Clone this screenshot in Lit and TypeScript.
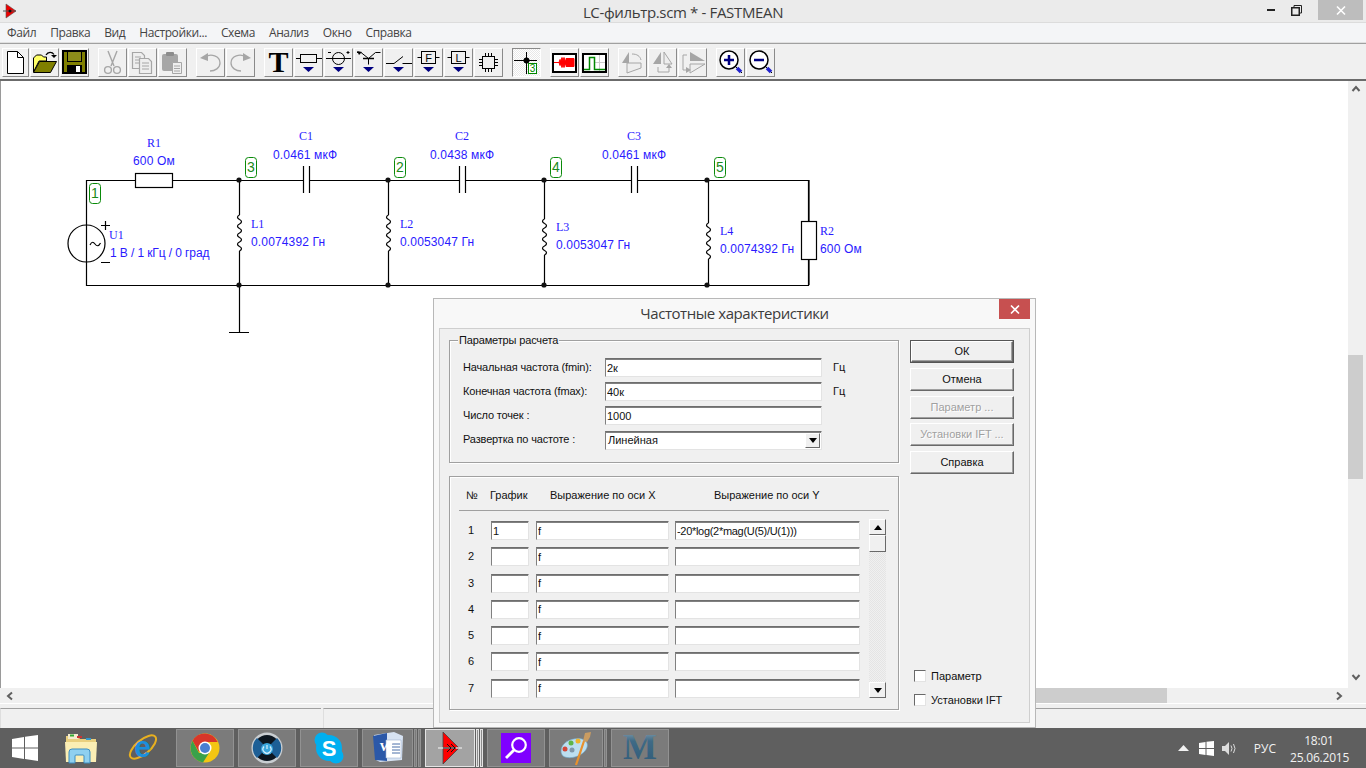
import { LitElement, html, css, svg } from 'lit';
import { customElement } from 'lit/decorators.js';

// --- toolbar icons, drawn in a 27x27 box ---
const GREY = '#a6a6a6';
const drop = svg`<path d="M8 18h11l-5.5 5z" fill="#000080"/>`;

const ICONS: Record<string, unknown> = {
  new: svg`<path d="M5.5 2.5h10l6 6v16h-16z" fill="#fff" stroke="#000"/><path d="M15.5 2.5v6h6" fill="none" stroke="#000"/>`,
  open: svg`<path d="M2.5 23V9l3-3h5l2 2h3v4H8z" fill="#ff6" stroke="#000"/>
    <path d="M2.5 23.5 8.5 12.5h17l-6 11z" fill="#808000" stroke="#000"/>
    <path d="M15 6c2-3.5 6-3.5 8-.5" fill="none" stroke="#000" stroke-width="1.3"/><path d="M20 6h6l-3 3z" fill="#000"/>`,
  save: svg`<rect x="2" y="2" width="23" height="22" fill="#808000" stroke="#000" stroke-width="2"/>
    <rect x="6.5" y="2.5" width="14" height="10" fill="#8c8c1a" stroke="#000"/>
    <rect x="6" y="16" width="15" height="8" fill="#000"/><rect x="15" y="17" width="4" height="6" fill="#fff"/>`,
  cut: svg`<g fill="none" stroke="${GREY}" stroke-width="1.4"><path d="M9 2l6 15M18 2l-6 15"/><circle cx="9" cy="21" r="3.4"/><circle cx="18" cy="21" r="3.4"/></g>`,
  copy: svg`<g fill="#eee" stroke="${GREY}" stroke-width="1.2"><path d="M3.5 3.5h9l3 3v13h-12z"/><path d="M10.5 9.5h9l3 3v12h-12z"/><path d="M6 8h6M6 11h4M6 14h4M13 14h7M13 17h7M13 20h7" fill="none"/></g>`,
  paste: svg`<rect x="3" y="5" width="16" height="17" rx="2" fill="${GREY}"/><rect x="7" y="3" width="8" height="4" rx="1" fill="#8c8c8c"/>
    <path d="M13.5 13.5h9v11h-9z" fill="#eee" stroke="${GREY}"/><path d="M15 17h6M15 19.5h6M15 22h6" stroke="${GREY}"/>`,
  undo: svg`<path d="M8 8c6-4 15-1 15 6 0 5-5 8-10 8" fill="none" stroke="${GREY}" stroke-width="1.3"/><path d="M3 9l8-5v8z" fill="${GREY}"/>`,
  redo: svg`<path d="M19 8c-6-4-15-1-15 6 0 5 5 8 10 8" fill="none" stroke="${GREY}" stroke-width="1.3"/><path d="M24 9l-8-5v8z" fill="${GREY}"/>`,
  text: svg`<text x="13.500" y="23" text-anchor="middle" class="ti-t">T</text>`,
  res: svg`<g fill="none" stroke="#000"><rect x="5.500" y="5.500" width="16" height="8"/><path d="M1 9.500h4.500M21.500 9.500H27"/></g>${drop}`,
  source: svg`<g fill="none" stroke="#000"><circle cx="13.500" cy="9.500" r="6"/><path d="M1 9.500h25M23 2v3M21.500 3.500h3M3 3.500h3"/></g>${drop}`,
  trans: svg`<g fill="none" stroke="#000"><path d="M2 3.500h4l7.500 6 7-6h5M13.500 9.500v6"/><path d="M8 9.500h11" stroke-width="1.500"/></g><path d="M2 2l5 1-3 3z" fill="#000"/>${drop}`,
  switch: svg`<path d="M1 14.500h8l9-7M17.500 14.500H27" fill="none" stroke="#000"/>${drop}`,
  fblock: svg`<g fill="none" stroke="#000"><rect x="6.500" y="2.500" width="14" height="12"/><path d="M2.500 8.500h4M20.500 8.500h4"/></g><text x="13.500" y="13" text-anchor="middle" class="ti-b">F</text>${drop}`,
  lblock: svg`<g fill="none" stroke="#000"><rect x="6.500" y="2.500" width="14" height="12"/><path d="M2.500 8.500h4M20.500 8.500h4"/></g><text x="13.500" y="13" text-anchor="middle" class="ti-b">L</text>${drop}`,
  chip: svg`<g fill="none" stroke="#000"><rect x="7.500" y="7.500" width="12" height="12"/><path d="M10.500 4v3M13.500 4v3M16.500 4v3M10.500 20v3M13.500 20v3M16.500 20v3M4 10.500h3M4 13.500h3M4 16.500h3M20 10.500h3M20 13.500h3M20 16.500h3"/></g>`,
  node: svg`<path d="M1 11.500h23M13.500 3v22" fill="none" stroke="#000"/><circle cx="13.500" cy="11.500" r="3"/><rect x="15.500" y="14.500" width="8" height="10" fill="#fff" stroke="#080"/><text x="19.500" y="23" text-anchor="middle" class="ti-g">3</text>`,
  wave: svg`<rect x="2" y="5" width="23" height="18" fill="#fff" stroke="#000" stroke-width="2"/><path d="M3 13.500h5l1-3 1 1 1-3 1 3 1-3 1 3 1-1v-1h8v8h-8v-1l-1-1-1 3-1-3-1 3-1-3-1 1-1-3H3z" fill="#f00" stroke="#f00"/>`,
  pulse: svg`<rect x="2" y="5" width="23" height="18" fill="#fff" stroke="#000" stroke-width="2"/><path d="M18.500 6v16M13 13.500h11" stroke="#ccc"/><path d="M3 20.500h5.500v-12h5v12H24" fill="none" stroke="#080" stroke-width="1.500"/>`,
  rot: svg`<path d="M3 14 10 3v11z" fill="${GREY}"/><path d="M13 5c5 0 8 2 9 6" fill="none" stroke="${GREY}"/><path d="M8 24l14-5v-5H8z" fill="#eee" stroke="${GREY}"/>`,
  flipv: svg`<path d="M12 15V3L4 15z" fill="${GREY}"/><path d="M15 15V3l8 12z" fill="#eee" stroke="${GREY}"/><path d="M9 18v5h11v-5" fill="none" stroke="${GREY}"/><path d="M17 19h6l-3-4z" fill="${GREY}"/>`,
  fliph: svg`<path d="M11 12V3l15 9z" fill="${GREY}"/><path d="M11 15v9l15-9z" fill="#eee" stroke="${GREY}"/><path d="M8 6H4v15h4" fill="none" stroke="${GREY}"/><path d="M7 18v6l5-3z" fill="${GREY}"/>`,
  zin: svg`<circle cx="12" cy="11" r="9" fill="#fff" stroke="#000" stroke-width="1.500"/><path d="M7 11h10M12 6v10" stroke="#000080" stroke-width="2.500"/><path d="M19 18l6 6" stroke="#000"/><path d="M20 19l4 4" stroke="#2222cc" stroke-width="3.500"/>`,
  zout: svg`<circle cx="12" cy="11" r="9" fill="#fff" stroke="#000" stroke-width="1.500"/><path d="M7 11h10" stroke="#000080" stroke-width="2.500"/><path d="M19 18l6 6" stroke="#000"/><path d="M20 19l4 4" stroke="#2222cc" stroke-width="3.500"/>`,
};

const TOOL_GROUPS = [
  ['new', 'open', 'save'],
  ['cut', 'copy', 'paste'],
  ['undo', 'redo'],
  ['text', 'res', 'source', 'trans', 'switch', 'fblock', 'lblock', 'chip'],
  ['node'],
  ['wave', 'pulse'],
  ['rot', 'flipv', 'fliph'],
  ['zin', 'zout'],
];

const MENU = ['Файл', 'Правка', 'Вид', 'Настройки...', 'Схема', 'Анализ', 'Окно', 'Справка'];

// --- schematic, canvas coordinates are the page coordinates ---
const NODES = [[239, 180], [388, 180], [544, 180], [707, 180], [239, 285], [388, 285], [544, 285], [707, 285]];
const NODE_TAGS: [number, number, string][] = [[89, 183, '1'], [245, 157, '3'], [394, 157, '2'], [550, 157, '4'], [714, 157, '5']];
const NAMES: [number, number, string][] = [
  [147, 147, 'R1'], [299, 140, 'C1'], [455, 140, 'C2'], [627, 140, 'C3'], [109, 239, 'U1'],
  [251, 228, 'L1'], [400, 228, 'L2'], [556, 231, 'L3'], [720, 235, 'L4'], [820, 235, 'R2'],
];
const VALUES: [number, number, string][] = [
  [133, 165, '600 Ом'], [273, 159, '0.0461 мкФ'], [430, 159, '0.0438 мкФ'], [602, 159, '0.0461 мкФ'],
  [251, 246, '0.0074392 Гн'], [400, 246, '0.0053047 Гн'],
  [556, 249, '0.0053047 Гн'], [720, 253, '0.0074392 Гн'], [820, 253, '600 Ом'],
];
const coil = (x: number, y: number) =>
  `M${x} ${y}` + ' q-4 2 0 4.500 q4 2 0 4.500'.repeat(4);

const schematic = svg`
  <g fill="none" stroke="#000" stroke-width="1.200">
    <path d="M135 180.500H86.500V285.500H808.500V180.500H637M631 180.500H465M459.500 180.500H309M303 180.500H173"/>
    <rect x="135.500" y="173.500" width="37" height="14" fill="#fff"/>
    <path d="M303.500 166v27M309.500 166v27M459.500 166v27M465.500 166v27M631.500 166v27M637.500 166v27"/>
    <path d="M239.500 180V215M239.500 251V332M229 332.500h20"/>
    <path d="${coil(239.5, 215)}"/>
    <path d="M388.500 180V215M388.500 251V285"/><path d="${coil(388.5, 215)}"/>
    <path d="M544.500 180V219M544.500 255V285"/><path d="${coil(544.5, 219)}"/>
    <path d="M708.500 180V223M708.500 259V285"/><path d="${coil(708.5, 223)}"/>
    <rect x="801.500" y="221.500" width="15" height="38" fill="#fff"/>
    <path d="M809 180V221M809 260V285"/>
    <circle cx="86.500" cy="243.500" r="18.500"/>
    <path d="M90 245c2-4 3.500-3 5-1s3.500 3 5.500-1"/>
    <path d="M101 225.500h9M105.500 221v9M101 262.500h9"/>
  </g>
  ${NODES.map(([x, y]) => svg`<circle cx="${x}" cy="${y}" r="2.600" fill="#111"/>`)}
  ${NODE_TAGS.map(([x, y, t]) => svg`
    <rect x="${x + 0.5}" y="${y + 0.5}" width="11" height="20" rx="3" fill="#fff" stroke="#0a8a0a"/>
    <text x="${x + 6}" y="${y + 15}" class="tag">${t}</text>`)}
  ${NAMES.map(([x, y, t]) => svg`<text x="${x}" y="${y}" class="name">${t}</text>`)}
  ${VALUES.map(([x, y, t]) => svg`<text x="${x}" y="${y}" class="val">${t}</text>`)}
  <text x="110" y="257" class="val src">1 В / 1 кГц / 0 град</text>
`;

const ROWS = [1, 2, 3, 4, 5, 6, 7];

// --- taskbar icons ---
const startIcon = svg`<svg width="26" height="26" viewBox="0 0 26 26"><path d="M0 4l12-2v10.500H0zM13 1.800 26 0v12.500H13zM0 13.500h12V24L0 22zM13 13.500h13V26l-13-2z" fill="#fff"/></svg>`;
const explorerIcon = svg`<svg width="34" height="32" viewBox="0 0 34 32">
  <path d="M2 4h12l2 3h16v22H2z" fill="#e9cf7e"/><rect x="4" y="2" width="10" height="5" fill="#f4edd0"/><rect x="6" y="2.500" width="4" height="2" fill="#3a3"/><rect x="13" y="4" width="5" height="2" fill="#c33"/><rect x="22" y="6" width="5" height="2" fill="#39c"/>
  <path d="M1 10h32l-1 20H2z" fill="#fbeeb4"/>
  <path d="M5 31V20q0-3 3-3h15q3 0 3 3v11h-6v-7q0-1-1-1h-7q-1 0-1 1v7z" fill="#8fd0f0" stroke="#3d8dc0"/></svg>`;
const ieIcon = svg`<svg width="32" height="32" viewBox="0 0 32 32">
  <ellipse cx="16" cy="15" rx="16" ry="7" fill="none" stroke="#e8b020" stroke-width="2" transform="rotate(-40 16 15)"/>
  <text x="15.500" y="25" text-anchor="middle" class="ti-ie">e</text></svg>`;
const chromeIcon = svg`<svg width="30" height="30" viewBox="0 0 30 30">
  <circle cx="15" cy="15" r="14.500" fill="#f3c613"/>
  <path d="M15 .5A14.500 14.500 0 0 0 2.500 7.800L9 19 15 9h12.700A14.500 14.500 0 0 0 15 .5z" fill="#d8362a"/>
  <path d="M2.500 7.800A14.500 14.500 0 0 0 13 29.400L19 20H9z" fill="#3aa14a"/>
  <circle cx="15" cy="15" r="6.500" fill="#fff"/><circle cx="15" cy="15" r="5" fill="#4a7fd0"/></svg>`;
const powerIcon = svg`<svg width="32" height="32" viewBox="0 0 32 32">
  <circle cx="16" cy="16" r="15.500" fill="#c9ced2"/><circle cx="16" cy="16" r="13" fill="#0c1620"/>
  <path d="M16 16 6 6a14 14 0 0 0 0 20zM16 16l10-10a14 14 0 0 1 0 20z" fill="#1d5f96"/>
  <circle cx="16" cy="17" r="6" fill="#3aa6dc"/><path d="M16 13v4M13 14.500a4 4 0 1 0 6 0" fill="none" stroke="#d8f2ff" stroke-width="1.200"/></svg>`;
const skypeIcon = svg`<svg width="30" height="32" viewBox="0 0 30 32">
  <circle cx="8" cy="8" r="7.500" fill="#00aff0"/><circle cx="22" cy="24" r="7.500" fill="#00aff0"/><circle cx="15" cy="16" r="13" fill="#00aff0"/>
  <text x="15" y="24" text-anchor="middle" class="ti-sk">S</text></svg>`;
const wordIcon = svg`<svg width="32" height="32" viewBox="0 0 32 32">
  <path d="M2 3 22 0l9 4-1 24-22 2-4-2z" fill="#d7e3f3"/><path d="M1 4l14-3v28L3 28z" fill="#2b58a8"/>
  <path d="M14 8h15v18H14z" fill="#fff" stroke="#9db3d2" stroke-width=".6"/><path d="M20 12h8M20 15h8M20 18h8M20 21h8" stroke="#4a6ea8"/>
  <text x="14" y="19" text-anchor="middle" class="ti-w">W</text></svg>`;
const fastmeanIcon = svg`<svg width="26" height="32" viewBox="0 0 26 32">
  <path d="M6 0v32L22 16z" fill="#f00" stroke="#444" stroke-width=".8"/>
  <path d="M1 16h24" stroke="#ddd" stroke-width="1.500"/><path d="M6 16h13M10 12l4 4-4 4M14 12l4 4-4 4" fill="none" stroke="#111"/></svg>`;
const searchIcon = svg`<svg width="30" height="30" viewBox="0 0 30 30"><rect width="30" height="30" fill="#7f00ff"/>
  <circle cx="18" cy="12" r="6.800" fill="none" stroke="#fff" stroke-width="2.200"/><path d="M13 17l-8 8" stroke="#fff" stroke-width="2.800"/></svg>`;
const paletteIcon = svg`<svg width="34" height="34" viewBox="0 0 34 34">
  <path d="M2 20C2 11 14 6 23 8c7 2 7 9 1 14-6 5-16 6-20 3-1-1-2-3-2-5z" fill="#bcdff0" stroke="#6ca6c8" stroke-width=".6"/>
  <circle cx="6" cy="18" r="2.500" fill="#d2483a"/><circle cx="12" cy="12" r="2.500" fill="#5eb547"/><circle cx="19" cy="10" r="2.500" fill="#eeb52c"/><circle cx="13" cy="19" r="2.500" fill="#7f98aa"/>
  <path d="M25 10 17 34" stroke="#e8912c" stroke-width="2.200"/><path d="M24 10l2-8 6-1-1 5-3 5z" fill="#c99c62"/></svg>`;
const mIcon = svg`<svg width="42" height="34" viewBox="0 0 42 34">
  <defs><linearGradient id="mg" x1="0" y1="0" x2="0" y2="1"><stop offset="0" stop-color="#9fb3bf"/><stop offset=".35" stop-color="#3f6a86"/><stop offset="1" stop-color="#2f5a78"/></linearGradient></defs>
  <text x="21" y="28" text-anchor="middle" class="ti-m" fill="url(#mg)">M</text></svg>`;

const TASK_ITEMS = [
  { icon: chromeIcon, w: 58, stacks: 0 },
  { icon: powerIcon, w: 58, stacks: 0 },
  { icon: skypeIcon, w: 58, stacks: 0 },
  { icon: wordIcon, w: 51, stacks: 2 },
  { icon: fastmeanIcon, w: 50, stacks: 2, active: true },
  { icon: searchIcon, w: 58, stacks: 0 },
  { icon: paletteIcon, w: 54, stacks: 1 },
  { icon: mIcon, w: 58, stacks: 0 },
];

@customElement('app-root')
export class AppRoot extends LitElement {
  static styles = css`
    :host { display: block; width: 1366px; height: 768px; }
    svg { overflow: visible; }
    .app {
      position: relative; width: 1366px; height: 768px; overflow: hidden;
      display: flex; flex-direction: column; background: #f0f0f0;
      font-family: "Liberation Sans", Arial, sans-serif; font-size: 11px; color: #111;
    }

    /* main window chrome */
    .title { height: 23px; flex: none; background: #ebebeb; display: flex; align-items: flex-start; border-bottom: 1px solid #dcdcdc; box-sizing: border-box; }
    .title .appicon { margin: 4px 0 0 3px; }
    .title .caption { flex: 1; text-align: center; font: 15px/24px "Open Sans", sans-serif; color: #3c3c3c; padding-left: 90px; letter-spacing: -0.35px; }
    .wbtn { width: 25px; height: 20px; display: flex; align-items: center; justify-content: center; }
    .wbtn.close { width: 45px; background: #bdbdbd; margin: 0 3px 0 9px; }
    .menu { height: 19px; flex: none; background: #f4f5f7; display: flex; font: 12px/20px "Open Sans", sans-serif; color: #444; }
    .menu span { padding: 0 7px; letter-spacing: -0.4px; }
    .toolbar {
      height: 37px; flex: none; box-sizing: border-box; display: flex;
      border-top: 1px solid #e0e0e0; padding-top: 5px; background: #f0f0f0;
      box-shadow: inset 0 1px 0 #a0a0a0;
    }
    .group { display: flex; margin-right: 8px; }
    .tb {
      width: 29px; height: 29px; margin-right: 1px; box-sizing: border-box; background: #f0f0f0;
      border: 1px solid; border-color: #fff #8a8a8a #8a8a8a #fff; display: flex; align-items: center; justify-content: center;
    }
    .group:first-child .tb:first-child { width: 27px; margin-left: 2px; }
    .tb.on { background: repeating-conic-gradient(#fff 0 25%, #e8e8e8 0 50%) 0 0 / 2px 2px; border-color: #8a8a8a #fff #fff #8a8a8a; }
    .ti-t { font: bold 30px "Liberation Serif", serif; fill: #000; }
    .ti-b { font: 11px "Liberation Sans", sans-serif; fill: #000; }
    .ti-g { font: 10px "Liberation Sans", sans-serif; fill: #080; }
    .ti-ie { font: bold 30px "Liberation Sans", sans-serif; fill: #1c8fdc; }
    .ti-sk { font: bold 22px "Liberation Sans", sans-serif; fill: #fff; }
    .ti-w { font: bold 13px "Liberation Serif", serif; fill: #fff; }
    .ti-m { font: bold 36px "Liberation Serif", serif; }

    /* work area */
    .work { flex: 1; display: grid; grid-template-columns: 1348px 15px 3px; grid-template-rows: 1fr 15px; border-top: 2px solid #6b6b6b; min-height: 0; }
    .canvas { background: #fff; border-left: 1px solid #9a9a9a; overflow: hidden; }
    .canvas svg { display: block; overflow: hidden; }
    .tag { font: 14px "Liberation Sans", sans-serif; fill: #1a8a1a; text-anchor: middle; }
    .name { font: 12px "Liberation Serif", serif; fill: #2a1aff; }
    .val { font: 12px "Liberation Sans", sans-serif; fill: #2a1aff; letter-spacing: 0.15px; }
    .val.src { letter-spacing: -0.1px; }
    .vscroll { background: #f0f0f0; display: flex; flex-direction: column; align-items: center; padding-top: 4px; box-sizing: border-box; }
    .vscroll .ar { height: 11px; flex: none; line-height: 0; }
    .vscroll .gap { height: 259px; flex: none; }
    .vscroll .thumb { width: 15px; height: 124px; background: #cdcdcd; flex: none; }
    .vscroll .rest { flex: 1; }
    .vscroll .ar.down { height: 15px; }
    .hscroll { background: #f0f0f0; display: flex; align-items: center; }
    .hscroll .left { margin-left: 6px; line-height: 0; }
    .hscroll .track { flex: 1; }
    .hscroll .thumb { width: 135px; height: 15px; background: #cdcdcd; }
    .hscroll .right { margin: 0 5px 0 168px; line-height: 0; }
    .side { background: #f0f0f0; }
    .status { height: 25px; flex: none; display: flex; box-sizing: border-box; background: #f0f0f0; padding-top: 4px; border-top: 1px solid #fff; }
    .status .cell { box-sizing: border-box; height: 20px; border-top: 1px solid #a0a0a0; border-left: 1px solid #dedede; }
    .status .c1 { width: 321px; margin-right: 2px; }
    .status .c2 { flex: 1; }

    /* taskbar */
    .taskbar { height: 40px; flex: none; background: #5f5f5f; display: flex; align-items: stretch; color: #fff; }
    .pin { display: flex; align-items: center; justify-content: center; }
    .pin.start { width: 50px; }
    .pin.p { width: 62px; }
    .tasks { display: flex; gap: 4px; margin-left: 2px; padding-top: 1px; height: 38px; }
    .task { display: flex; gap: 1px; }
    .task .face, .task .sliver { box-sizing: border-box; height: 38px; background: #7b7b7b; border: 1px solid #929292; }
    .task .face { display: flex; align-items: center; justify-content: center; }
    .task .sliver { width: 3px; }
    .task.active .face { background: #a3a3a3; border-color: #e4e4e4; }
    .task.active .sliver { border-color: #e4e4e4; background: #8d8d8d; }
    .tray { margin-left: auto; display: flex; align-items: center; font: 12px "Open Sans", sans-serif; color: #f2f2f2; }
    .tray .lang { margin: 0 14px 0 16px; font-size: 12px; }
    .tray .flag { margin: 0 8px 0 10px; line-height: 0; }
    .clock { width: 58px; margin-right: 18px; padding-top: 2px; text-align: center; line-height: 17px; font-size: 12px; letter-spacing: -0.2px; }

    /* dialog window */
    .dialog {
      position: absolute; left: 433px; top: 298px; width: 603px; height: 430px; box-sizing: border-box;
      background: #f8f8f8; border: 1px solid #b8b8b8; display: flex; flex-direction: column;
    }
    .dlg-title { height: 29px; flex: none; display: flex; position: relative; align-items: center; justify-content: center; font: 15px "Open Sans", sans-serif; color: #3c3c3c; letter-spacing: -0.45px; padding-bottom: 1px; box-sizing: border-box; }
    .dlg-close { position: absolute; right: 5px; top: 0; width: 31px; height: 20px; background: #c75050; display: flex; align-items: center; justify-content: center; }
    .client { flex: 1; margin: 0 5px 4px 5px; background: #f0f0f0; border: 1px solid #cfcfcf; display: flex; gap: 11px; padding: 11px 15px 12px 9px; box-sizing: border-box; min-height: 0; }
    .col-left { width: 450px; flex: none; display: flex; flex-direction: column; gap: 13px; }
    .col-right { width: 104px; flex: none; display: flex; flex-direction: column; }
    .group-box { position: relative; box-sizing: border-box; border: 1px solid #a0a0a0; box-shadow: 1px 1px 0 #fff, inset 1px 1px 0 #fff; }
    .params { height: 123px; padding: 17px 0 0 13px; display: grid; grid-template-columns: 142px 217px auto; grid-auto-rows: 19px; row-gap: 5px; align-items: center; }
    .params > span { letter-spacing: -0.15px; padding-bottom: 1px; }
    .legend { position: absolute; left: 8px; top: -7px; padding: 0 1px; background: #f0f0f0; line-height: 13px; }
    .params > .hz { padding-left: 11px; letter-spacing: 0; }
    .field {
      box-sizing: border-box; height: 19px; width: 100%; margin: 0; padding: 0 1px; background: #fff; outline: none;
      border: 1px solid; border-color: #6e6e6e #e3e3e3 #e3e3e3 #808080; box-shadow: inset 0 1px 0 #808080;
      font: 11px "Liberation Sans", sans-serif; color: #111;
    }
    .select { display: flex; align-items: center; margin-top: 1px; }
    .select span { flex: 1; padding-left: 1px; }
    .arrow {
      width: 15px; height: 15px; box-sizing: border-box; background: #f0f0f0; display: flex; align-items: center; justify-content: center;
      border: 1px solid; border-color: #fff #696969 #696969 #fff; flex: none;
    }
    .table { height: 234px; padding: 10px 0 0 0; }
    .thead { display: grid; grid-template-columns: 31px 60px 164px auto; margin: 0 9px 0 9px; padding-bottom: 7px; border-bottom: 1px solid #a0a0a0; line-height: 16px; }
    .thead span:first-child { padding-left: 7px; }
    .tbody { display: flex; padding-top: 8px; }
    .trows { display: grid; grid-template-columns: 41px 38px 140px 191px; row-gap: 7px; padding-top: 2px; }
    .trows .n { text-align: center; padding-left: 1px; line-height: 19px; }
    .trows .x { margin-left: 7px; width: 133px; }
    .trows .y { margin-left: 6px; width: 185px; letter-spacing: -0.3px; }
    .tscroll { width: 17px; height: 179px; margin-left: 9px; display: flex; flex-direction: column; background: repeating-conic-gradient(#f0f0f0 0 25%, #e4e4e4 0 50%) 0 0 / 2px 2px; }
    .tscroll .arrow { width: 17px; height: 16px; }
    .tscroll .thumb { height: 17px; box-sizing: border-box; background: #f0f0f0; border: 1px solid; border-color: #fff #696969 #696969 #fff; }
    .tscroll .sp { flex: 1; }
    .btn {
      box-sizing: border-box; height: 23px; width: 104px; display: flex; align-items: center; justify-content: center; padding-bottom: 1px;
      background: #f0f0f0; border: 1px solid; border-color: #fff #696969 #696969 #fff; margin-bottom: 4.75px; box-shadow: inset -1px -1px 0 #a0a0a0;
    }
    .btn.def { outline: 1px solid #555; outline-offset: -1px; border-width: 2px; }
    .btn.off { color: #a0a0a0; text-shadow: 1px 1px 0 #fff; }
    .checks { margin-top: auto; display: flex; flex-direction: column; gap: 12px; padding: 0 0 4px 4px; }
    .check { display: flex; align-items: center; gap: 5px; line-height: 12px; }
    .box { width: 12px; height: 12px; box-sizing: border-box; background: #fff; border: 1px solid; border-color: #696969 #e3e3e3 #e3e3e3 #696969; }
  `;

  private tri(up: boolean) {
    const d = up ? 'M0 5L4 0l4 5z' : 'M0 0h8L4 5z';
    return html`<svg width="8" height="5" viewBox="0 0 8 5"><path d="${d}" fill="#000"/></svg>`;
  }

  private chevron(d: string) {
    return html`<svg width="8" height="8" viewBox="0 0 8 8"><path d="${d}" fill="none" stroke="#606060" stroke-width="2"/></svg>`;
  }

  private renderTitle() {
    return html`<div class="title">
      <svg class="appicon" width="14" height="14" viewBox="0 0 14 14">
        <path d="M3 0v14l10-7z" fill="#e00" stroke="#555" stroke-width=".6"/><path d="M0 7h13" stroke="#555"/><circle cx="7" cy="7" r="1.500" fill="#111"/>
      </svg>
      <div class="caption">LC-фильтр.scm * - FASTMEAN</div>
      <div class="wbtn"><svg width="9" height="3"><rect width="8" height="2" y="0" fill="#222"/></svg></div>
      <div class="wbtn"><svg width="11" height="11" viewBox="0 0 11 11"><path d="M3 2V.5h7.500V8H8.500" fill="none" stroke="#222"/><rect x=".75" y="2.750" width="7.500" height="7.500" fill="none" stroke="#222" stroke-width="1.500"/></svg></div>
      <div class="wbtn close"><svg width="10" height="9" viewBox="0 0 10 9"><path d="M1 .5l8 8M9 .5l-8 8" stroke="#fff" stroke-width="1.600"/></svg></div>
    </div>`;
  }

  private renderToolbar() {
    return html`<div class="toolbar">
      ${TOOL_GROUPS.map(
        (g) => html`<div class="group">
          ${g.map(
            (id) => html`<div class="tb ${id === 'node' ? 'on' : ''}">
              <svg width="27" height="27" viewBox="0 0 27 27">${ICONS[id]}</svg>
            </div>`
          )}
        </div>`
      )}
    </div>`;
  }

  private renderWork() {
    return html`<div class="work">
      <div class="canvas"><svg width="1347" height="608" viewBox="1 81 1347 608">${schematic}</svg></div>
      <div class="vscroll">
        <div class="ar">${this.chevron('M.5 6L4 2l3.500 4')}</div>
        <div class="gap"></div>
        <div class="thumb"></div>
        <div class="rest"></div>
        <div class="ar down">${this.chevron('M.5 2L4 6l3.500-4')}</div>
      </div>
      <div class="side"></div>
      <div class="hscroll">
        <span class="left">${this.chevron('M6 .5L2 4l4 3.500')}</span>
        <span class="track"></span>
        <span class="thumb"></span>
        <span class="right">${this.chevron('M2 .5L6 4 2 7.500')}</span>
      </div>
      <div class="side"></div>
      <div class="side"></div>
    </div>`;
  }

  private renderTaskbar() {
    return html`<div class="taskbar">
      <div class="pin start">${startIcon}</div>
      <div class="pin p">${explorerIcon}</div>
      <div class="pin p">${ieIcon}</div>
      <div class="tasks">
        ${TASK_ITEMS.map(
          (t) => html`<div class="task ${t.active ? 'active' : ''}">
            <div class="face" style="width:${t.w}px">${t.icon}</div>
            ${Array.from({ length: t.stacks }, () => html`<div class="sliver"></div>`)}
          </div>`
        )}
      </div>
      <div class="tray">
        <svg width="11" height="6" viewBox="0 0 11 6"><path d="M0 6l5.500-6L11 6z" fill="#f2f2f2"/></svg>
        <span class="flag"><svg width="15" height="15" viewBox="0 0 15 15"><path d="M0 2l6.500-1v6H0zM7.500 .8 15 0v7H7.500zM0 8h6.500v6L0 13zM7.500 8H15v7l-7.500-1z" fill="#fff"/></svg></span>
        <svg width="16" height="15" viewBox="0 0 16 15"><path d="M0 5h3l4-4v13l-4-4H0z" fill="#ddd"/><path d="M9 4.500q2 3 0 6M11.500 3q3 4.500 0 9" fill="none" stroke="#ddd"/></svg>
        <span class="lang">РУС</span>
        <div class="clock">18:01<br />25.06.2015</div>
      </div>
    </div>`;
  }

  private renderDialog() {
    return html`<div class="dialog">
      <div class="dlg-title">
        Частотные характеристики
        <div class="dlg-close"><svg width="10" height="9" viewBox="0 0 10 9"><path d="M1 .5l8 8M9 .5l-8 8" stroke="#fff" stroke-width="1.600"/></svg></div>
      </div>
      <div class="client">
        <div class="col-left">
          <div class="group-box params">
            <span class="legend">Параметры расчета</span>
            <span>Начальная частота (fmin):</span><input class="field" .value=${'2к'} /><span class="hz">Гц</span>
            <span>Конечная частота (fmax):</span><input class="field" .value=${'40к'} /><span class="hz">Гц</span>
            <span>Число точек :</span><input class="field" .value=${'1000'} /><span></span>
            <span>Развертка по частоте :</span>
            <div class="field select"><span>Линейная</span><div class="arrow">${this.tri(false)}</div></div>
          </div>
          <div class="group-box table">
            <div class="thead">
              <span>№</span><span>График</span><span>Выражение по оси X</span><span>Выражение по оси Y</span>
            </div>
            <div class="tbody">
              <div class="trows">
                ${ROWS.map(
                  (n) => html`<span class="n">${n}</span>
                    <input class="field" .value=${n === 1 ? '1' : ''} />
                    <input class="field x" .value=${'f'} />
                    <input class="field y" .value=${n === 1 ? '-20*log(2*mag(U(5)/U(1)))' : ''} />`
                )}
              </div>
              <div class="tscroll">
                <div class="arrow">${this.tri(true)}</div>
                <div class="thumb"></div>
                <div class="sp"></div>
                <div class="arrow">${this.tri(false)}</div>
              </div>
            </div>
          </div>
        </div>
        <div class="col-right">
          <div class="btn def">ОК</div>
          <div class="btn">Отмена</div>
          <div class="btn off">Параметр ...</div>
          <div class="btn off">Установки IFT ...</div>
          <div class="btn">Справка</div>
          <div class="checks">
            <div class="check"><span class="box"></span>Параметр</div>
            <div class="check"><span class="box"></span>Установки IFT</div>
          </div>
        </div>
      </div>
    </div>`;
  }

  render() {
    return html`<div class="app">
      ${this.renderTitle()}
      <div class="menu">${MENU.map((m) => html`<span>${m}</span>`)}</div>
      ${this.renderToolbar()}
      ${this.renderWork()}
      <div class="status"><div class="cell c1"></div><div class="cell c2"></div></div>
      ${this.renderTaskbar()}
      ${this.renderDialog()}
    </div>`;
  }
}
